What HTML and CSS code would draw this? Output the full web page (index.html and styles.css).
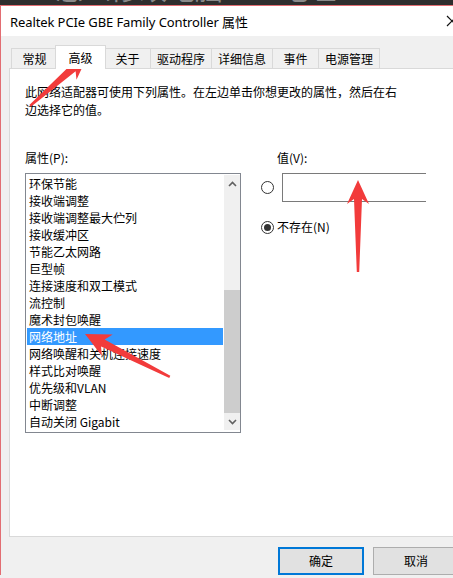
FILE: index.html
```html
<!DOCTYPE html>
<html lang="zh-CN">
<head>
    <meta charset="UTF-8">
    <title>Realtek PCIe GBE Family Controller 属性</title>
    <link rel="stylesheet" href="styles.css">
</head>
<body>
    <div class="backdrop"><span class="backdrop-text">怎么修改电脑MAC地址</span></div>

    <div class="dialog">
        <div class="titlebar">
            <span class="title">Realtek PCIe GBE Family Controller 属性</span>
            <svg class="close" width="12" height="12" viewBox="0 0 12 12">
                <path d="M1 1 L11 11 M11 1 L1 11" stroke="#111" stroke-width="1.2"/>
            </svg>
        </div>

        <div class="tabs">
            <div class="tab">常规</div>
            <div class="tab active">高级</div>
            <div class="tab">关于</div>
            <div class="tab">驱动程序</div>
            <div class="tab">详细信息</div>
            <div class="tab">事件</div>
            <div class="tab last">电源管理</div>
        </div>

        <div class="panel">
            <p class="intro">此网络适配器可使用下列属性。在左边单击你想更改的属性，然后在右<br>边选择它的值。</p>

            <div class="columns">
                <div class="props">
                    <div class="field-label">属性(P):</div>
                    <div class="listbox">
                        <ul class="items">
                            <li>环保节能</li>
                            <li>接收端调整</li>
                            <li>接收端调整最大伫列</li>
                            <li>接收缓冲区</li>
                            <li>节能乙太网路</li>
                            <li>巨型帧</li>
                            <li>连接速度和双工模式</li>
                            <li>流控制</li>
                            <li>魔术封包唤醒</li>
                            <li class="selected">网络地址</li>
                            <li>网络唤醒和关机连接速度</li>
                            <li>样式比对唤醒</li>
                            <li>优先级和VLAN</li>
                            <li>中断调整</li>
                            <li>自动关闭 Gigabit</li>
                        </ul>
                        <div class="scrollbar">
                            <div class="scroll-btn">
                                <svg width="9" height="6" viewBox="0 0 9 6"><path d="M1 5 L4.5 1.5 L8 5" fill="none" stroke="#606060" stroke-width="1.6"/></svg>
                            </div>
                            <div class="track"><div class="thumb"></div></div>
                            <div class="scroll-btn">
                                <svg width="9" height="6" viewBox="0 0 9 6"><path d="M1 1 L4.5 4.5 L8 1" fill="none" stroke="#606060" stroke-width="1.6"/></svg>
                            </div>
                        </div>
                    </div>
                </div>

                <div class="values">
                    <div class="field-label value-label">值(V):</div>
                    <div class="value-row">
                        <span class="radio"></span>
                        <div class="textbox"></div>
                    </div>
                    <div class="value-row absent">
                        <span class="radio checked"></span>
                        <span>不存在(N)</span>
                    </div>
                </div>
            </div>
        </div>

        <div class="buttons">
            <div class="button default">确定</div>
            <div class="button">取消</div>
        </div>
    </div>

    <!-- red annotation arrows drawn over the screenshot -->
    <svg class="arrows" width="453" height="578" viewBox="0 0 453 578">
        <g fill="#f23b3b">
            <polygon transform="translate(88 55) rotate(-41.3)" points="0,0 -25,-11 -20,-4 -77,-1.2 -77,1.2 -20,4 -25,11"/>
            <polygon transform="translate(358 180) rotate(-90)" points="0,0 -24,-11 -19,-4 -92,-1.2 -92,1.2 -19,4 -24,11"/>
            <polygon transform="translate(85 334) rotate(-153.2)" points="0,0 -25,-12 -20,-4 -95,-1.2 -95,1.2 -20,4 -25,12"/>
        </g>
    </svg>
</body>
</html>
```

FILE: styles.css
```css
body {
    margin: 0;
    width: 453px;
    height: 578px;
    overflow: hidden;
    background: #f0f0f0;
    font-family: "Noto Sans CJK SC", "Noto Sans", sans-serif;
    font-size: 12px;
    color: #000;
    position: relative;
}

.backdrop {
    height: 5px;
    overflow: hidden;
    background: #2e2e2e;
}

.backdrop-text {
    display: block;
    margin: -27px 0 0 55px;
    font-size: 28px;
    line-height: 30px;
    color: #8a8a8a;
    white-space: nowrap;
}

.dialog {
    width: 470px;
    background: #f0f0f0;
    border-top: 1px solid #e26d72;
    border-left: 1px solid #e26d72;
}

.titlebar {
    height: 30px;
    background: #fff;
    display: flex;
    align-items: center;
    justify-content: space-between;
    padding: 0 10px 0 9px;
}

.title {
    font-family: "Noto Sans", "Noto Sans CJK SC", sans-serif;
    font-size: 13px;
    letter-spacing: -0.1px;
}

.close {
    margin-right: 3px;
}

.tabs {
    display: flex;
    align-items: flex-end;
    padding: 9px 0 0 10px;
    margin-bottom: -1px;
    position: relative;
    z-index: 1;
}

.tab {
    box-sizing: border-box;
    min-width: 46px;
    height: 20px;
    margin-bottom: 1px;
    padding: 0 6px;
    line-height: 20px;
    text-align: center;
    background: #f0f0f0;
    border: 1px solid #d9d9d9;
    border-right: none;
    border-bottom: none;
}

.tab.last {
    border-right: 1px solid #d9d9d9;
}

.tab.active {
    height: 24px;
    margin: 0 -2px 0 -2px;
    padding: 2px 8px 0;
    min-width: 51px;
    background: #fff;
    border-right: 1px solid #d9d9d9;
    position: relative;
    z-index: 2;
}

.tab.active + .tab {
    border-left: none;
    padding-left: 7px;
}

.panel {
    box-sizing: border-box;
    height: 469px;
    margin: 0 0 0 8px;
    padding: 14px 0 0 15px;
    background: #fff;
    border: 1px solid #d9d9d9;
}

.intro {
    margin: 0;
    line-height: 18px;
}

.columns {
    display: flex;
    gap: 18px;
    margin-top: 30px;
}

.props {
    width: 216px;
}

.field-label {
    line-height: 18px;
    margin-bottom: 6px;
}

.listbox {
    box-sizing: border-box;
    width: 216px;
    height: 260px;
    border: 1px solid #828790;
    padding: 1px 0 0 1px;
    display: flex;
    gap: 1px;
}

.items {
    list-style: none;
    margin: 0;
    padding: 0;
    width: 197px;
}

.items li {
    height: 17px;
    line-height: 17px;
    padding-left: 2px;
    white-space: nowrap;
}

.items li.selected {
    background: #3399ff;
    color: #fff;
}

.scrollbar {
    width: 16px;
    height: 255px;
    background: #f0f0f0;
    display: flex;
    flex-direction: column;
}

.scroll-btn {
    height: 17px;
    display: flex;
    align-items: center;
    justify-content: center;
}

.track {
    flex: 1;
    display: flex;
    flex-direction: column;
    justify-content: flex-end;
}

.thumb {
    height: 123px;
    background: #cdcdcd;
}

.values {
    padding-left: 2px;
}

.value-label {
    padding-left: 16px;
}

.value-row {
    display: flex;
    align-items: center;
    gap: 8px;
}

.radio {
    box-sizing: border-box;
    width: 13px;
    height: 13px;
    border: 1px solid #333;
    border-radius: 50%;
    background: #fff;
    display: flex;
    align-items: center;
    justify-content: center;
}

.radio.checked::after {
    content: "";
    width: 7px;
    height: 7px;
    border-radius: 50%;
    background: #333;
}

.textbox {
    box-sizing: border-box;
    width: 144px;
    height: 29px;
    border: 1px solid #7a7a7a;
    border-right: none;
}

.absent {
    gap: 3px;
    margin-top: 16px;
    line-height: 18px;
}

.buttons {
    display: flex;
    justify-content: flex-end;
    gap: 9px;
    padding: 10px 12px 0 0;
}

.button {
    box-sizing: border-box;
    width: 86px;
    height: 28px;
    line-height: 26px;
    text-align: center;
    background: #e1e1e1;
    border: 1px solid #adadad;
}

.button.default {
    border: 2px solid #0078d7;
    line-height: 24px;
}

.arrows {
    position: absolute;
    left: 0;
    top: 0;
}
```
